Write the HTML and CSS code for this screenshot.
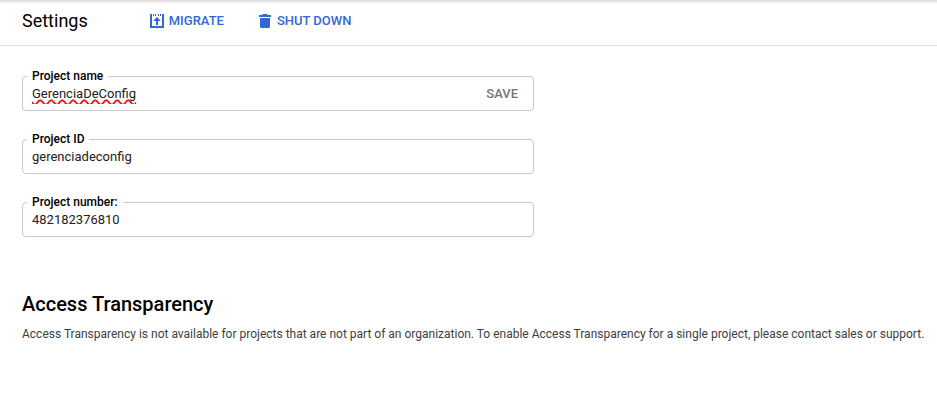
FILE: index.html
```html
<!DOCTYPE html>
<html lang="en">
<head>
<meta charset="utf-8">
<title>Settings</title>
<link rel="stylesheet" href="styles.css">
</head>
<body>
<header class="toolbar">
  <h1 class="title">Settings</h1>
  <div class="actions">
    <button class="action" type="button">
      <svg class="icon" viewBox="0 0 14 14" aria-hidden="true">
        <path d="M0 0h2v12h10V0h2v14H0zM3 0h1v2H3zM5 0h1v2H5zM8 0h1v2H8zM10 0h1v2h-1zM7 3l3.500 3.500V7H8v4H6V7H3.500v-.500z"/>
      </svg>
      Migrate
    </button>
    <button class="action" type="button">
      <svg class="icon" viewBox="0 0 14 14" aria-hidden="true">
        <path d="M1 1h3l1-1h4l1 1h3v2H1zM2 4h10v8.500q0 1.500-1.500 1.500h-7Q2 14 2 12.500z"/>
      </svg>
      Shut down
    </button>
  </div>
</header>
<main class="content">
  <form class="fields">
    <fieldset class="field">
      <legend class="legend"><label for="name">Project name</label></legend>
      <input class="input misspelled" id="name" type="text" value="GerenciaDeConfig" spellcheck="false">
      <button class="save" type="button">Save</button>
    </fieldset>
    <fieldset class="field">
      <legend class="legend"><label for="pid">Project ID</label></legend>
      <input class="input" id="pid" type="text" value="gerenciadeconfig" spellcheck="false" readonly>
    </fieldset>
    <fieldset class="field">
      <legend class="legend"><label for="number">Project number:</label></legend>
      <input class="input" id="number" type="text" value="482182376810" readonly>
    </fieldset>
  </form>
  <section>
    <h2 class="heading">Access Transparency</h2>
    <p class="text">Access Transparency is not available for projects that are not part of an organization. To enable Access Transparency for a single project, please contact sales or support.</p>
  </section>
</main>
</body>
</html>
```
FILE: styles.css
```css
* {
  box-sizing: border-box;
}

body {
  margin: 0;
  background: #fff;
  color: #000;
  font: 13px/20px Roboto, "Liberation Sans", sans-serif;
}

.toolbar {
  display: flex;
  align-items: center;
  gap: 62px;
  height: 46px;
  padding: 0 22px 4px;
  border-bottom: 1px solid #e0e0e0;
  background: linear-gradient(#d8d8d8, #fff 4px);
}

.title {
  margin: 0;
  font-size: 18px;
  font-weight: 400;
}

.actions {
  display: flex;
  gap: 34px;
}

.action {
  display: flex;
  align-items: center;
  gap: 5px;
  padding: 0;
  border: 0;
  background: none;
  color: #3367d6;
  font: 500 13px/20px Roboto, "Liberation Sans", sans-serif;
  text-transform: uppercase;
}

.icon {
  width: 14px;
  height: 14px;
  fill: currentColor;
}

.content {
  padding: 22px 8px 22px 22px;
}

.fields {
  display: flex;
  flex-direction: column;
  gap: 20px;
  max-width: 512px;
  margin-bottom: 55px;
}

.field {
  display: flex;
  align-items: center;
  min-width: 0;
  margin: 0;
  padding: 0 15px 6px 4px;
  border: 1px solid #c8c8c8;
  border-radius: 4px;
}

.legend {
  padding: 0 5px;
  font-size: 12px;
  font-weight: 500;
  line-height: 16px;
}

.input {
  flex: 1;
  min-width: 0;
  height: 20px;
  padding: 0 5px;
  border: 0;
  outline: 0;
  background: none;
  color: #212121;
  font: 13px/20px Roboto, "Liberation Sans", sans-serif;
}

.misspelled {
  text-decoration: underline wavy #e81c1c 2px;
  text-decoration-skip-ink: none;
}

.save {
  padding: 0;
  border: 0;
  background: none;
  color: #757575;
  font: 500 13px/20px Roboto, "Liberation Sans", sans-serif;
  text-transform: uppercase;
}

.heading {
  margin: 0 0 8px;
  font-size: 20px;
  font-weight: 500;
  line-height: 24px;
}

.text {
  margin: 0;
  color: #3c4043;
  font-size: 12px;
}
```
